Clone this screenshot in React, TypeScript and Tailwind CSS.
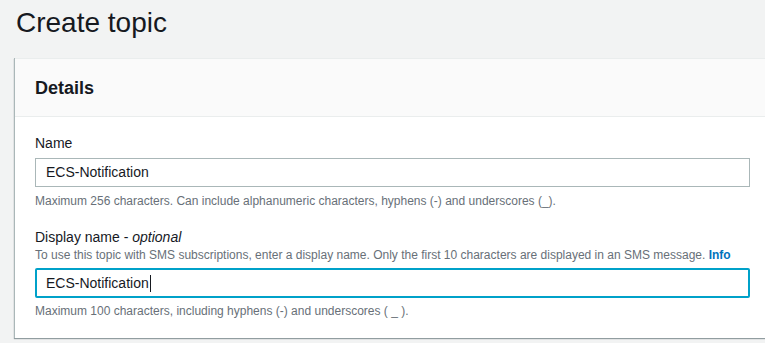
export default function App() {
  return (
    <div
      className="h-[343px] w-[765px] overflow-hidden bg-[#f2f3f3] text-[#16191f]"
      style={{ fontFamily: '"Liberation Sans", Arial, sans-serif' }}
    >
      <h1 className="pl-4 pt-[5px] text-[28px] leading-[36px] font-normal">Create topic</h1>

      <div className="ml-[14px] mt-[17px] h-[280px] border-l border-[#aab7b8] bg-white shadow-[0_1px_1px_0_rgba(0,28,36,0.4)]">
        <div className="flex h-[59px] items-center border-y border-[#eaeded] bg-[#fafafa] px-5">
          <h2 className="text-[18px] font-bold leading-[22px]">Details</h2>
        </div>

        <div className="px-5 pt-4">
          <label className="block text-[14px] leading-[20px]">Name</label>
          <div className="mt-[5px] flex h-[29px] w-[715px] items-center border border-[#aab7b8] bg-white px-[10px] text-[14px]">
            ECS-Notification
          </div>
          <p className="mt-[6px] text-[12px] leading-[16px] text-[#687078]">
            Maximum 256 characters. Can include alphanumeric characters, hyphens (-) and underscores (_).
          </p>

          <label className="mt-[18px] block text-[14px] leading-[20px]">
            Display name - <i>optional</i>
          </label>
          <p className="text-[12px] leading-[16px] text-[#687078]">
            To use this topic with SMS subscriptions, enter a display name. Only the first 10 characters are
            displayed in an SMS message. <span className="font-bold text-[#0073bb]">Info</span>
          </p>
          <div className="mt-[5px] flex h-[30px] w-[715px] items-center rounded-[2px] border-2 border-[#00a1c9] bg-white px-[9px] text-[14px]">
            ECS-Notification<span className="ml-[1px] inline-block h-[17px] w-px bg-[#16191f]" />
          </div>
          <p className="mt-[5px] text-[12px] leading-[16px] text-[#687078]">
            Maximum 100 characters, including hyphens (-) and underscores ( _ ).
          </p>
        </div>
      </div>
    </div>
  );
}
